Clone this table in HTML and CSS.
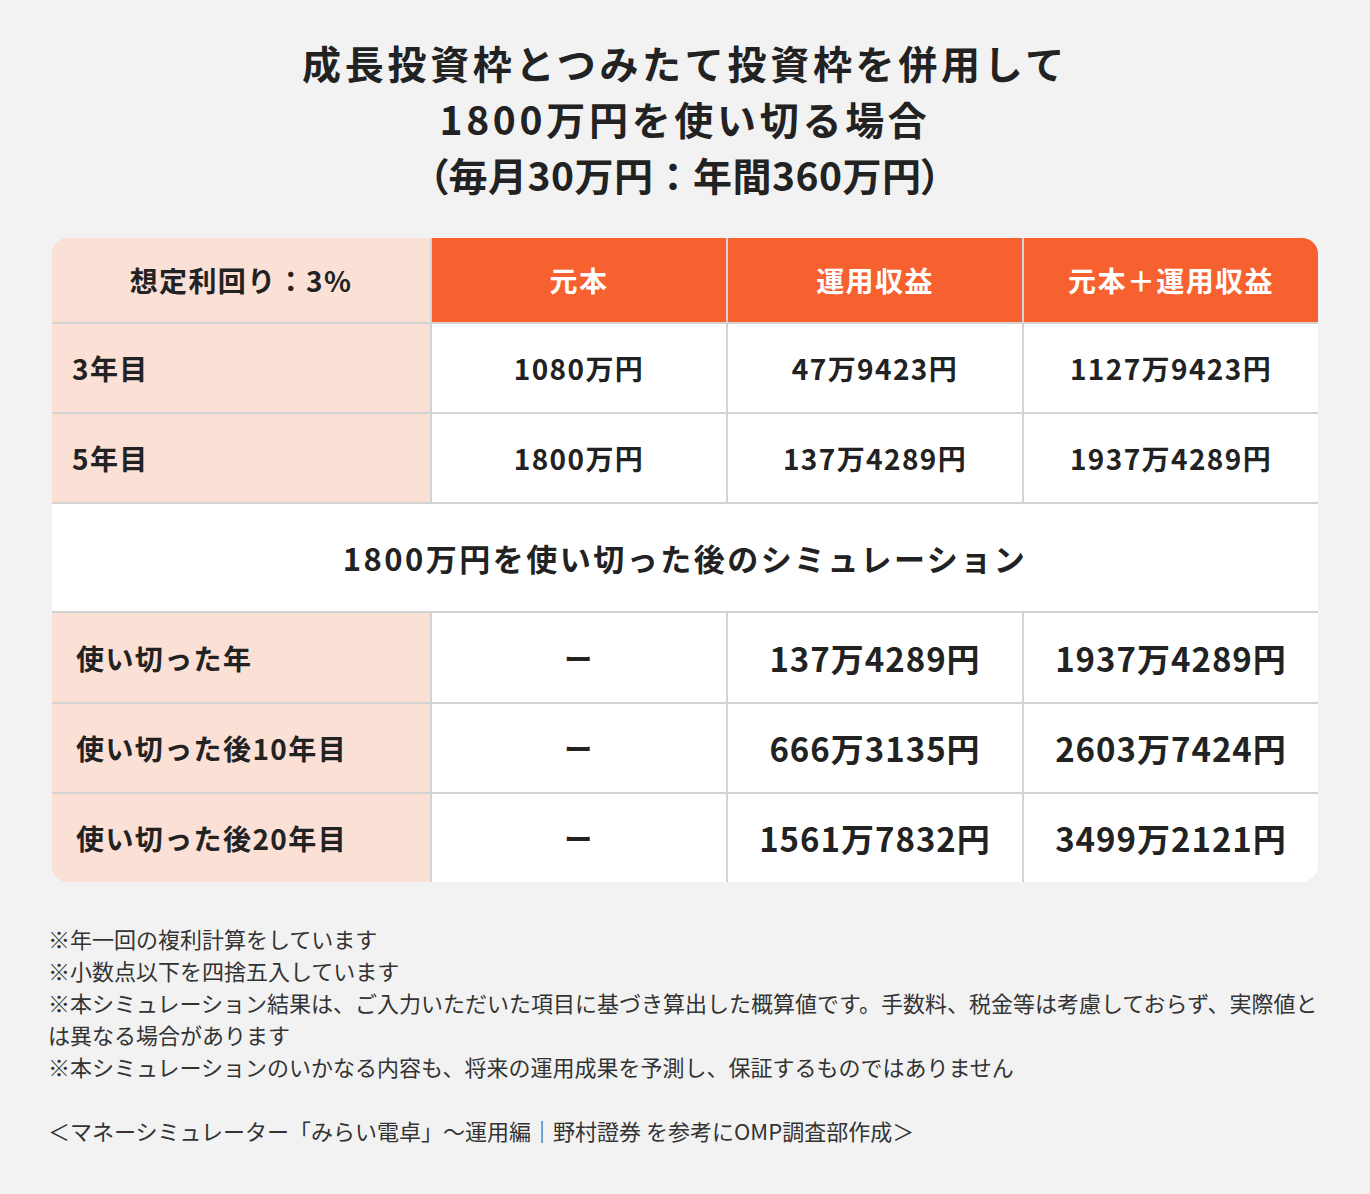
FILE: index.html
```html
<!DOCTYPE html>
<html lang="ja">
<head>
<meta charset="utf-8">
<title>成長投資枠とつみたて投資枠を併用して1800万円を使い切る場合</title>
<link rel="stylesheet" href="styles.css">
</head>
<body>
<div class="page">
  <h1 class="title">成長投資枠とつみたて投資枠を併用して<br>1800万円を使い切る場合<br><span class="sub"><span class="paren">（</span>毎月30万円：年間360万円<span class="paren">）</span></span></h1>

  <div class="table">
    <div class="cell label head-label">想定利回り：3%</div>
    <div class="cell head">元本</div>
    <div class="cell head">運用収益</div>
    <div class="cell head">元本＋運用収益</div>

    <div class="cell label">3年目</div>
    <div class="cell val">1080万円</div>
    <div class="cell val">47万9423円</div>
    <div class="cell val">1127万9423円</div>

    <div class="cell label">5年目</div>
    <div class="cell val">1800万円</div>
    <div class="cell val">137万4289円</div>
    <div class="cell val">1937万4289円</div>

    <div class="cell section">1800万円を使い切った後のシミュレーション</div>

    <div class="cell label label2">使い切った年</div>
    <div class="cell val">ー</div>
    <div class="cell val big">137万4289円</div>
    <div class="cell val big">1937万4289円</div>

    <div class="cell label label2">使い切った後10年目</div>
    <div class="cell val">ー</div>
    <div class="cell val big">666万3135円</div>
    <div class="cell val big">2603万7424円</div>

    <div class="cell label label2">使い切った後20年目</div>
    <div class="cell val">ー</div>
    <div class="cell val big">1561万7832円</div>
    <div class="cell val big">3499万2121円</div>
  </div>

  <div class="notes">
    <p>※年一回の複利計算をしています</p>
    <p>※小数点以下を四捨五入しています</p>
    <p>※本シミュレーション結果は、ご入力いただいた項目に基づき算出した概算値です。手数料、税金等は考慮しておらず、実際値とは異なる場合があります</p>
    <p>※本シミュレーションのいかなる内容も、将来の運用成果を予測し、保証するものではありません</p>
    <p class="source">＜マネーシミュレーター「みらい電卓」～運用編｜野村證券 を参考にOMP調査部作成＞</p>
  </div>
</div>
</body>
</html>
```

FILE: styles.css
```css
* { box-sizing: border-box; }
html, body { margin: 0; padding: 0; }
body {
  background: #f2f2f2;
  font-family: "Noto Sans CJK JP", "Noto Sans", sans-serif;
  color: #222;
}
.page {
  width: 1370px;
  padding: 34px 52px 0 52px;
}
.title {
  margin: 0;
  text-align: center;
  font-size: 39px;
  line-height: 56px;
  font-weight: 700;
  letter-spacing: 3.7px;
}
.title .sub {
  letter-spacing: 0.5px;
}
.title .paren {
  font-feature-settings: "palt";
}
.table {
  margin-top: 36px;
  display: grid;
  grid-template-columns: 378px 1fr 1fr 1fr;
  grid-template-rows: 84px 88px 88px 107px 89px 88px 88px;
  gap: 2px;
  background: #d3d3d3;
  border-radius: 16px;
  overflow: hidden;
}
.cell {
  display: flex;
  align-items: center;
  justify-content: center;
  background: #fff;
  font-weight: 700;
  font-size: 28px;
  letter-spacing: 0.05em;
}
.label {
  background: #fbe0d6;
  justify-content: flex-start;
  padding-left: 20px;
}
.label2 { padding-left: 24px; }
.head-label { justify-content: center; padding-left: 0; }
.head {
  background: #f76130;
  color: #fff;
}
.val { color: #222; }
.big { font-size: 33px; letter-spacing: 0.03em; }
.section {
  grid-column: 1 / -1;
  font-size: 31px;
  letter-spacing: 0.08em;
}
.notes {
  margin-top: 40px;
  margin-left: -4px;
  width: 1280px;
  font-size: 22px;
  line-height: 32px;
  color: #333;
}
.notes p { margin: 0; }
.notes .source { margin-top: 32px; }
```
